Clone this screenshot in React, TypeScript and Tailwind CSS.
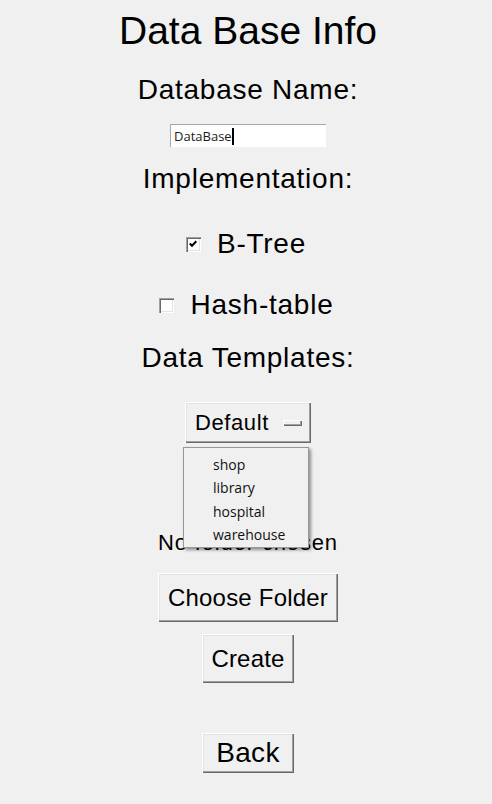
import React from "react";

const raised =
  "bg-[#f0f0f0] shadow-[inset_1px_1px_0_#ffffff,inset_-1px_-1px_0_#696969,inset_-2px_-2px_0_#a0a0a0,inset_2px_2px_0_#e3e3e3]";

function CheckBox({ checked }: { checked: boolean }) {
  return (
    <div className="w-[15px] h-[15px] bg-[#ffffff] shadow-[inset_1px_1px_0_#a0a0a0,inset_2px_2px_0_#696969,inset_-1px_-1px_0_#ffffff,inset_-2px_-2px_0_#e3e3e3] flex items-center justify-center">
      {checked && (
        <svg width="10" height="10" viewBox="0 0 10 10">
          <path d="M1.8 4.5 L4 6.8 L8.3 2.2" stroke="#000" strokeWidth="2" fill="none" />
        </svg>
      )}
    </div>
  );
}

export default function App() {
  const label = "text-[28px] leading-[28px] tracking-[0.75px] text-black";
  return (
    <div
      className="w-full min-h-[804px] bg-[#f0f0f0] flex flex-col items-center pl-[4px] text-black"
      style={{ fontFamily: '"Liberation Sans", Arial, sans-serif' }}
    >
      <div className="mt-[11px] text-[39px] leading-[40px] tracking-[0px]">Data Base Info</div>
      <div className={`mt-[25px] ${label}`}>Database Name:</div>
      <div className="mt-[20px] w-[156px] h-[23px] bg-white border-t border-l border-[#a8a8a8] flex items-center pl-[3px]">
        <span
          className="text-[13px] leading-[16px] text-[#1a1a1a]"
          style={{ fontFamily: '"Open Sans", "Noto Sans", sans-serif' }}
        >
          DataBase
        </span>
        <span className="w-[2px] h-[17px] bg-black" />
      </div>
      <div className={`mt-[18px] ${label}`}>Implementation:</div>
      <div className="mt-[37px] h-[28px] flex items-center gap-[16px] pr-[4px]">
        <CheckBox checked />
        <span className={label}>B-Tree</span>
      </div>
      <div className="mt-[33px] h-[28px] flex items-center gap-[17px] pr-[4px]">
        <CheckBox checked={false} />
        <span className={label}>Hash-table</span>
      </div>
      <div className={`mt-[25px] ${label}`}>Data Templates:</div>
      <div className="relative mt-[30px]">
        <div className={`w-[126px] h-[41px] ${raised} flex items-center pl-[10px]`}>
          <span className="text-[22px] leading-[22px] tracking-[0.6px]">Default</span>
          <span className="ml-auto mr-[9px] w-[19px] h-[6px] bg-[#f0f0f0] shadow-[inset_1px_1px_0_#ffffff,inset_-1px_-1px_0_#696969,inset_-2px_-2px_0_#a0a0a0]" />
        </div>
        <div
          className="absolute left-[-2px] top-[45px] w-[126px] h-[101px] bg-[#f0f0f0] border border-[#979797] shadow-[2px_2px_3px_rgba(0,0,0,0.4)] pl-[29px] pt-[5px] z-10"
          style={{ fontFamily: '"Open Sans", "Noto Sans", sans-serif' }}
        >
          {["shop", "library", "hospital", "warehouse"].map((t) => (
            <div key={t} className="text-[14px] leading-[23.3px] text-[#111]">
              {t}
            </div>
          ))}
        </div>
      </div>
      <div className="mt-[89px] text-[22px] leading-[22px] tracking-[0.85px]">No folder chosen</div>
      <div className={`mt-[19px] w-[180px] h-[49px] ${raised} flex items-center justify-center`}>
        <span className="text-[24px] leading-[24px] tracking-[0.2px]">Choose Folder</span>
      </div>
      <div className={`mt-[12px] w-[92px] h-[49px] ${raised} flex items-center justify-center`}>
        <span className="text-[24px] leading-[24px] tracking-[0.2px]">Create</span>
      </div>
      <div className={`mt-[50px] w-[92px] h-[40px] ${raised} flex items-center justify-center`}>
        <span className="text-[28px] leading-[28px] tracking-[0.3px]">Back</span>
      </div>
    </div>
  );
}
